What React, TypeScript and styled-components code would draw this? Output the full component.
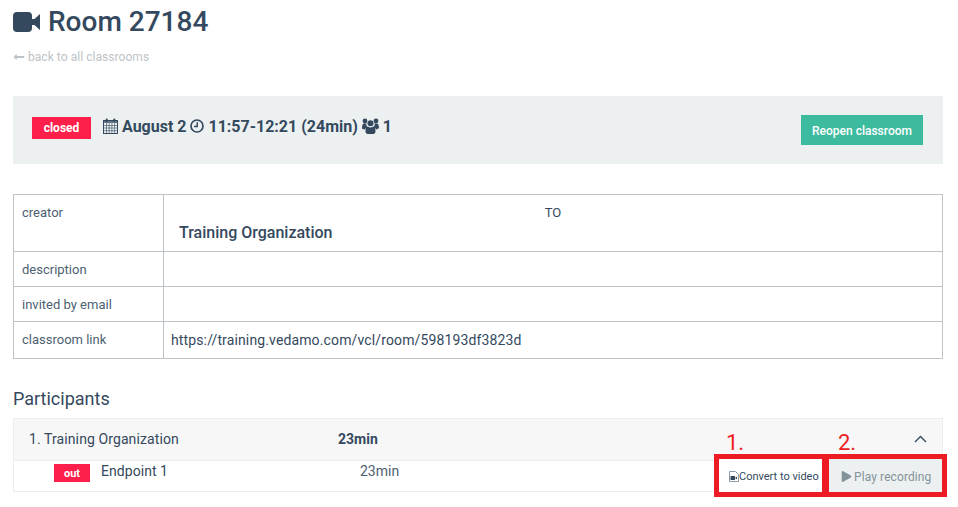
import React from "react";
import styled, { createGlobalStyle } from "styled-components";
import { FaLongArrowAltLeft, FaPlay } from "react-icons/fa";

const dark = "#34495e";
const red = "#ff1f4b";

const GlobalStyle = createGlobalStyle`
  html, body {
    margin: 0;
    padding: 0;
    height: 100%;
    overflow: hidden;
    background: #fff;
    font-family: Roboto, "Liberation Sans", sans-serif;
    color: ${dark};
  }
`;

const Page = styled.div`
  width: 930px;
  padding-left: 13px;
`;

const Title = styled.h1`
  display: flex;
  align-items: center;
  gap: 8px;
  margin: 0;
  height: 43px;
  font-size: 28px;
  font-weight: 500;
  line-height: 43px;
`;

const BackLink = styled.a`
  display: flex;
  align-items: center;
  gap: 3px;
  margin-top: 5px;
  height: 17px;
  font-size: 12px;
  letter-spacing: 0.05px;
  color: #bdc3c7;
`;

const Summary = styled.div`
  display: flex;
  align-items: center;
  justify-content: space-between;
  height: 68px;
  margin-top: 31px;
  padding: 0 20px 0 19px;
  background: #ecf0f1;
`;

const SummaryInfo = styled.div`
  display: flex;
  align-items: center;
  margin-top: -8px;
  font-size: 16px;
  font-weight: 700;
  white-space: pre;
  svg {
    flex: none;
  }
`;

const Badge = styled.span<{ $width: number; $height: number; $size: number }>`
  display: inline-flex;
  align-items: center;
  justify-content: center;
  flex: none;
  width: ${(p) => p.$width}px;
  height: ${(p) => p.$height}px;
  background: ${red};
  color: #fff;
  font-size: ${(p) => p.$size}px;
  font-weight: 700;
`;

const ClosedBadge = styled(Badge)`
  margin: 4px 12px 0 0;
`;

const ReopenButton = styled.button`
  width: 122px;
  height: 30px;
  border: 0;
  padding: 2px 0 0;
  background: #3dbb9f;
  color: #fff;
  font-family: inherit;
  font-size: 12px;
  font-weight: 500;
`;

const InfoTable = styled.table`
  width: 930px;
  margin-top: 30px;
  border-collapse: collapse;
  table-layout: fixed;
  font-size: 13px;
  td {
    border: 1px solid #bdc3c7;
    vertical-align: top;
  }
`;

const LabelCell = styled.td`
  box-sizing: border-box;
  width: 150px;
  padding: 10px 8px 0;
  color: #4c5f71;
`;

const ValueCell = styled.td<{ $height: number }>`
  height: ${(p) => p.$height}px;
  padding: 8px 7px 0;
  font-size: 14px;
`;

const CreatorTag = styled.div`
  height: 20px;
  padding-top: 2px;
  box-sizing: border-box;
  text-align: center;
  font-size: 13px;
`;

const CreatorName = styled.div`
  padding-left: 8px;
  font-size: 16px;
  font-weight: 500;
  line-height: 20px;
`;

const LinkText = styled.div`
  font-size: 14px;
  letter-spacing: 0.13px;
  line-height: 21px;
`;

const SectionTitle = styled.h2`
  margin: 28px 0 0;
  height: 24px;
  font-size: 18px;
  font-weight: 400;
  line-height: 24px;
`;

const ParticipantList = styled.div`
  position: relative;
  margin-top: 7px;
  border: 1px solid #ecedee;
`;

const ParticipantHead = styled.div`
  display: flex;
  align-items: center;
  height: 39px;
  padding: 0 0 2px 15px;
  background: #f7f7f7;
  border-bottom: 1px solid #ecedee;
  font-size: 14px;
`;

const ParticipantName = styled.span`
  width: 309px;
  letter-spacing: 0.1px;
`;

const ParticipantTime = styled.span`
  font-weight: 700;
`;

const Chevron = styled.svg`
  margin-left: auto;
  margin-right: 15px;
  width: 13px;
  height: 8px;
`;

const EndpointRow = styled.div`
  display: flex;
  align-items: flex-start;
  height: 30px;
  padding-left: 40px;
  font-size: 14px;
`;

const OutBadge = styled(Badge)`
  margin: 3px 11px 0 0;
`;

const EndpointName = styled.span`
  width: 259px;
  line-height: 20px;
  letter-spacing: 0.05px;
`;

const EndpointTime = styled.span`
  line-height: 20px;
  color: #4c5f71;
`;

/* annotation drawn over the list row */
const Annotations = styled.div`
  position: absolute;
  top: 35px;
  right: -5px;
  display: flex;
`;

const Marked = styled.div<{ $width: number }>`
  position: relative;
  box-sizing: border-box;
  width: ${(p) => p.$width}px;
  height: 43px;
  border: 5px solid #ed1c24;
  & + & {
    margin-left: -3px;
  }
`;

const MarkNumber = styled.span<{ $left: number }>`
  position: absolute;
  left: ${(p) => p.$left}px;
  top: -29px;
  font-size: 22px;
  line-height: 26px;
  color: #ed1c24;
`;

const ConvertButton = styled.div`
  display: flex;
  align-items: center;
  height: 100%;
  padding: 2px 0 0 10px;
  box-sizing: border-box;
  background: #fff;
  font-size: 11px;
  white-space: nowrap;
`;

const PlayButton = styled.div`
  display: flex;
  align-items: center;
  gap: 2px;
  height: 100%;
  padding: 2px 0 0 12px;
  box-sizing: border-box;
  background: #ecf0f1;
  color: #84939a;
  font-size: 12px;
  letter-spacing: 0.1px;
  white-space: nowrap;
`;

const VideoIcon = () => (
  <svg width="27" height="20" viewBox="0 0 27 20">
    <rect x="0" y="0" width="19" height="20" rx="4" fill={dark} />
    <path d="M18 10l9-8v16z" fill={dark} />
    <path d="M18 7h3v6h-3z" fill={dark} />
  </svg>
);

const CalendarIcon = () => (
  <svg width="15" height="16" viewBox="0 0 15 16">
    <rect x="0.5" y="2.5" width="14" height="13" fill="none" stroke={dark} />
    <rect x="0.5" y="2.5" width="14" height="2.5" fill={dark} fillOpacity="0.75" />
    <path
      d="M1 7.500h13M1 10h13M1 12.700h13M3.500 5v10M6.200 5v10M8.900 5v10M11.600 5v10"
      stroke={dark}
      strokeWidth="0.6"
      fill="none"
    />
    <rect x="2.700" y="0.500" width="2" height="3.500" rx="1" fill={dark} />
    <rect x="10.300" y="0.500" width="2" height="3.500" rx="1" fill={dark} />
  </svg>
);

const ClockIcon = () => (
  <svg width="14" height="14" viewBox="0 0 14 14">
    <circle cx="7" cy="7" r="6" fill="none" stroke={dark} strokeWidth="1.7" />
    <path d="M7.200 3.200v4.300H4" fill="none" stroke={dark} strokeWidth="1.500" />
  </svg>
);

const UsersIcon = () => (
  <svg width="17" height="16" viewBox="0 0 17 16">
    <circle cx="8.500" cy="5.200" r="3" fill={dark} />
    <circle cx="3" cy="3" r="2.400" fill={dark} />
    <circle cx="14" cy="3" r="2.400" fill={dark} />
    <path
      d="M0 10c0-3 .8-4.600 2.400-4.600h2c-.3 1.700.3 3 1.300 4-1.500.4-2.500 1-3 2C1 11.400 0 11 0 10zM17 10c0-3-.8-4.600-2.400-4.600h-2c.3 1.700-.3 3-1.300 4 1.500.4 2.500 1 3 2 1.700-.6 2.700-1 2.700-1.400z"
      fill={dark}
    />
    <path
      d="M3.500 13.500c0-3.500.8-5 2.300-5 .8.700 1.700 1 2.700 1s1.900-.3 2.700-1c1.500 0 2.300 1.500 2.300 5 0 1.500-1 2.500-2.200 2.500H5.700c-1.200 0-2.200-1-2.200-2.500z"
      fill={dark}
    />
  </svg>
);

const FileIcon = () => (
  <svg width="10" height="11" viewBox="0 0 10 11">
    <path d="M.5.5h6l3 3v7h-9z" fill="#fff" stroke="#8a9aa8" />
    <rect x="1.500" y="5" width="4.500" height="4" fill={dark} />
    <path d="M6 7l2-1.500v3z" fill={dark} />
  </svg>
);

export default function App() {
  return (
    <Page>
      <GlobalStyle />
      <Title>
        <VideoIcon />
        Room 27184
      </Title>
      <BackLink>
        <FaLongArrowAltLeft size={12} />
        back to all classrooms
      </BackLink>
      <Summary>
        <SummaryInfo>
          <ClosedBadge $width={59} $height={22} $size={12}>
            closed
          </ClosedBadge>
          <CalendarIcon />
          {" August 2 "}
          <ClockIcon />
          {" 11:57-12:21 (24min) "}
          <UsersIcon />
          {" 1"}
        </SummaryInfo>
        <ReopenButton>Reopen classroom</ReopenButton>
      </Summary>
      <InfoTable>
        <tbody>
          <tr>
            <LabelCell>creator</LabelCell>
            <ValueCell $height={48}>
              <CreatorTag>TO</CreatorTag>
              <CreatorName>Training Organization</CreatorName>
            </ValueCell>
          </tr>
          <tr>
            <LabelCell>description</LabelCell>
            <ValueCell $height={26} />
          </tr>
          <tr>
            <LabelCell>invited by email</LabelCell>
            <ValueCell $height={26} />
          </tr>
          <tr>
            <LabelCell>classroom link</LabelCell>
            <ValueCell $height={28}>
              <LinkText>https://training.vedamo.com/vcl/room/598193df3823d</LinkText>
            </ValueCell>
          </tr>
        </tbody>
      </InfoTable>
      <SectionTitle>Participants</SectionTitle>
      <ParticipantList>
        <ParticipantHead>
          <ParticipantName>1. Training Organization</ParticipantName>
          <ParticipantTime>23min</ParticipantTime>
          <Chevron viewBox="0 0 13 8">
            <path d="M1 7l5.500-5.500L12 7" fill="none" stroke={dark} strokeWidth="1.400" />
          </Chevron>
        </ParticipantHead>
        <EndpointRow>
          <OutBadge $width={36} $height={18} $size={11}>
            out
          </OutBadge>
          <EndpointName>Endpoint 1</EndpointName>
          <EndpointTime>23min</EndpointTime>
        </EndpointRow>
        <Annotations>
          <Marked $width={113}>
            <MarkNumber $left={7}>1.</MarkNumber>
            <ConvertButton>
              <FileIcon />
              Convert to video
            </ConvertButton>
          </Marked>
          <Marked $width={123}>
            <MarkNumber $left={9}>2.</MarkNumber>
            <PlayButton>
              <FaPlay size={11} />
              Play recording
            </PlayButton>
          </Marked>
        </Annotations>
      </ParticipantList>
    </Page>
  );
}
